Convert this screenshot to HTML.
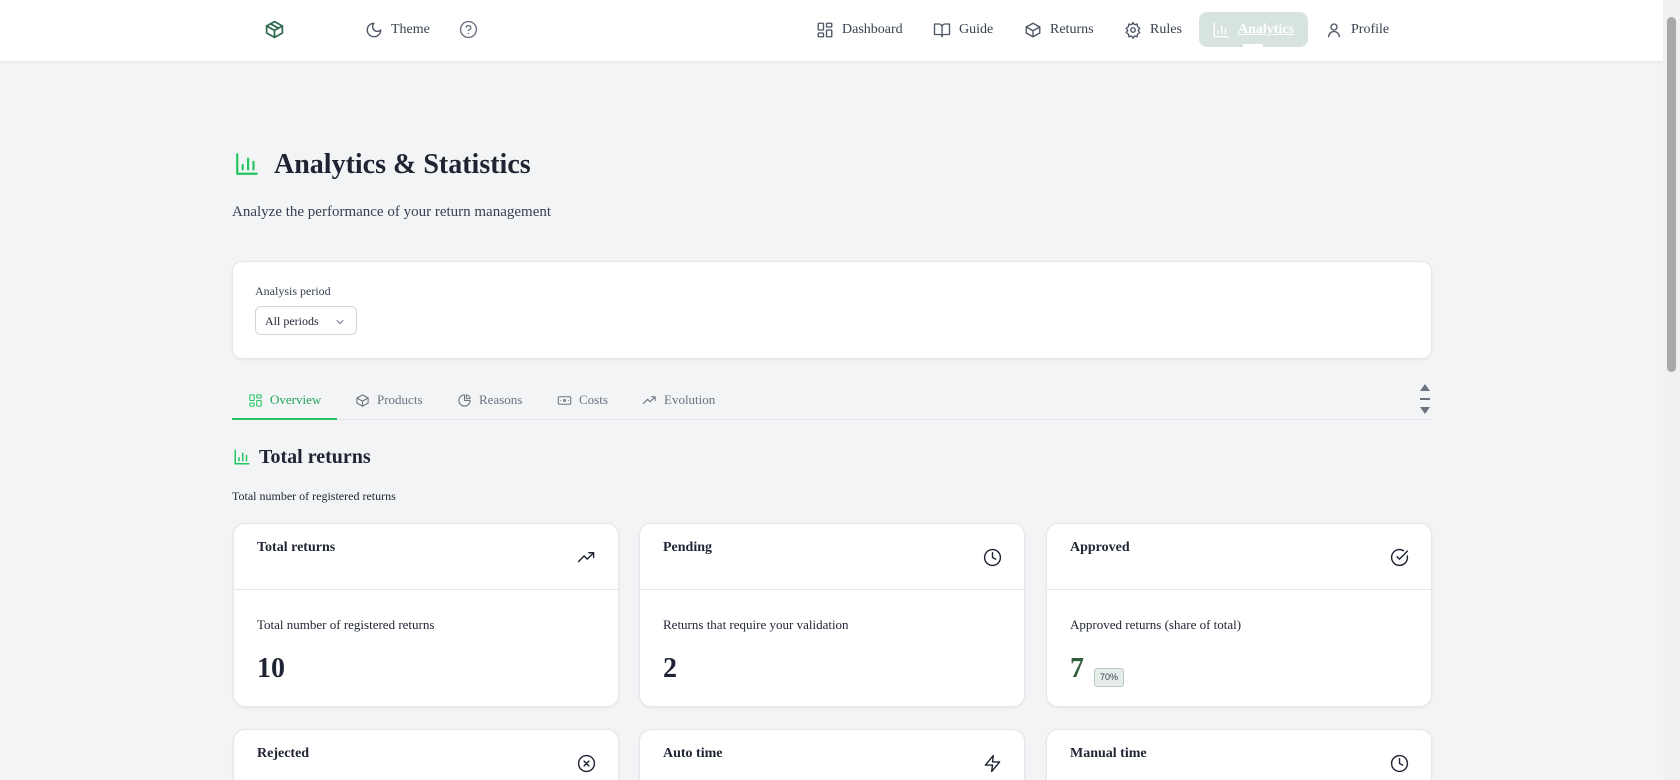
<!DOCTYPE html>
<html><head><meta charset="utf-8"><style>
*{box-sizing:border-box;margin:0;padding:0}
html{width:1680px;height:780px;overflow:hidden}
body{width:1680px;height:780px;overflow:hidden;background:#f3f4f6;font-family:"Liberation Serif",serif;color:#1f2433;position:relative}
#w{position:absolute;left:0;top:0;width:1680px;height:780px;overflow:hidden}
.nav{position:absolute;left:0;top:0;width:1663px;height:62px;background:#fff;border-bottom:1px solid #e5e7eb;box-shadow:0 1px 2px rgba(0,0,0,.04)}
.abs{position:absolute}
svg{fill:none;stroke-linecap:round;stroke-linejoin:round}
.ni{position:absolute;top:18px;font-size:14px;color:#374151;display:flex;align-items:center;height:24px}
.ni svg{width:18px;height:18px;stroke:#4b5563;stroke-width:1.8;margin-right:8px}
.pill{position:absolute;left:1199px;top:12px;width:109px;height:35px;background:#d6e3de;border-radius:8px}
.sb{position:absolute;left:1663px;top:0;width:17px;height:780px;background:#f1f1f1}
.sb .th{position:absolute;left:4px;top:17px;width:9px;height:355px;background:#a8a8a8;border-radius:5px}
.card{position:absolute;background:#fff;border:1px solid #e5e7eb;border-radius:10px;box-shadow:0 1px 3px rgba(0,0,0,.05)}
.tab{position:absolute;top:392px;font-size:13px;color:#6b7280;display:flex;align-items:center}
.tab svg{width:15px;height:15px;stroke:#6b7280;stroke-width:1.7;margin-right:7px}
.sc{position:absolute;width:386px;height:184px;background:#fff;border:1px solid #e5e7eb;border-radius:12px;box-shadow:0 1px 3px rgba(0,0,0,.06);overflow:hidden}
.sc .h{height:66px;border-bottom:1px solid #e5e7eb;position:relative}
.sc .t{position:absolute;left:23px;top:16px;font-size:14px;font-weight:bold;color:#1f2433}
.sc .h svg{position:absolute;right:22px;top:24px;width:19px;height:19px;stroke:#1f2433;stroke-width:1.8}
.sc .d{position:absolute;left:23px;top:93px;font-size:13px;color:#1f2433}
.sc .n{position:absolute;left:23px;top:129px;font-size:28px;font-weight:bold;color:#1f2433}
</style></head><body><div id="w">
<div class="nav">
 <svg class="abs" style="left:264px;top:19px;width:21px;height:21px;stroke:#2d6a4f;stroke-width:2" viewBox="0 0 24 24"><path d="M21 8 12 3 3 8v8l9 5 9-5z"/><path d="M3 8l9 5 9-5M12 13v8M7.5 5.5l9 5"/></svg>
 <div class="ni" style="left:365px"><svg viewBox="0 0 24 24"><path d="M12 3a6 6 0 0 0 9 9 9 9 0 1 1-9-9z"/></svg>Theme</div>
 <svg class="abs" style="left:459px;top:20px;width:19px;height:19px;stroke:#6b7280;stroke-width:1.8" viewBox="0 0 24 24"><circle cx="12" cy="12" r="10"/><path d="M9.1 9a3 3 0 0 1 5.8 1c0 2-3 3-3 3M12 17h.01"/></svg>
 <div class="ni" style="left:816px"><svg viewBox="0 0 24 24"><rect x="3" y="3" width="7" height="9" rx="1"/><rect x="14" y="3" width="7" height="5" rx="1"/><rect x="14" y="12" width="7" height="9" rx="1"/><rect x="3" y="16" width="7" height="5" rx="1"/></svg>Dashboard</div>
 <div class="ni" style="left:933px"><svg viewBox="0 0 24 24"><path d="M2 4h6a4 4 0 0 1 4 4v13a3 3 0 0 0-3-3H2zM22 4h-6a4 4 0 0 0-4 4v13a3 3 0 0 1 3-3h7z"/></svg>Guide</div>
 <div class="ni" style="left:1024px"><svg viewBox="0 0 24 24"><path d="M21 8 12 3 3 8v8l9 5 9-5z"/><path d="M3 8l9 5 9-5M12 13v8"/></svg>Returns</div>
 <div class="ni" style="left:1124px"><svg viewBox="0 0 24 24"><circle cx="12" cy="12" r="3"/><path d="M12 2l2 3 3.5-1 .5 3.5 3 2-2 3 2 3-3 2-.5 3.5-3.5-1-2 3-2-3-3.5 1-.5-3.5-3-2 2-3-2-3 3-2 .5-3.5 3.5 1z"/></svg>Rules</div>
 <div class="pill"></div>
 <div class="ni" style="left:1212px;color:#fff;font-weight:bold;text-decoration:underline"><svg viewBox="0 0 24 24" style="stroke:#fff"><path d="M3 3v18h18M8 17v-4M13 17V7M18 17v-7"/></svg>Analytics</div>
 <div class="abs" style="left:1243px;top:44px;width:20px;height:4px;background:#fff"></div>
 <div class="ni" style="left:1325px"><svg viewBox="0 0 24 24"><circle cx="12" cy="8" r="4"/><path d="M5 21a7 7 0 0 1 14 0"/></svg>Profile</div>
</div>
<div class="sb"><div class="th"></div></div>

<svg class="abs" style="left:234px;top:151px;width:26px;height:26px;stroke:#22c55e;stroke-width:2" viewBox="0 0 24 24"><path d="M3 3v18h18M8 17v-4M13 17V7M18 17v-7"/></svg>
<div class="abs" style="left:274px;top:149px;font-size:28px;font-weight:bold;color:#1f2433">Analytics &amp; Statistics</div>
<div class="abs" style="left:232px;top:204px;font-size:15px;color:#374151">Analyze the performance of your return management</div>

<div class="card" style="left:232px;top:261px;width:1200px;height:98px"></div>
<div class="abs" style="left:255px;top:284px;font-size:12px;color:#374151">Analysis period</div>
<div class="abs" style="left:255px;top:306px;width:102px;height:29px;background:#fff;border:1px solid #d1d5db;border-radius:6px;font-size:12px;padding:7px 0 0 9px;color:#1f2433">All periods<svg style="position:absolute;right:10px;top:9px;width:12px;height:12px;stroke:#6b7280;stroke-width:2" viewBox="0 0 24 24"><path d="M6 9l6 6 6-6"/></svg></div>

<div class="abs" style="left:232px;top:419px;width:1200px;height:1px;background:#e5e7eb"></div>
<div class="abs" style="left:232px;top:418px;width:105px;height:2px;background:#22c55e"></div>
<div class="tab" style="left:248px;color:#22a55a"><svg viewBox="0 0 24 24" style="stroke:#22c55e"><rect x="3" y="3" width="7" height="9" rx="1"/><rect x="14" y="3" width="7" height="5" rx="1"/><rect x="14" y="12" width="7" height="9" rx="1"/><rect x="3" y="16" width="7" height="5" rx="1"/></svg>Overview</div>
<div class="tab" style="left:355px"><svg viewBox="0 0 24 24"><path d="M21 8 12 3 3 8v8l9 5 9-5z"/><path d="M3 8l9 5 9-5M12 13v8"/></svg>Products</div>
<div class="tab" style="left:457px"><svg viewBox="0 0 24 24"><path d="M21 12A9 9 0 1 1 12 3v9z"/><path d="M15 3a6 6 0 0 1 6 6h-6z"/></svg>Reasons</div>
<div class="tab" style="left:557px"><svg viewBox="0 0 24 24"><rect x="2" y="6" width="20" height="12" rx="2"/><circle cx="12" cy="12" r="1.5"/><path d="M6 12h.01M18 12h.01"/></svg>Costs</div>
<div class="tab" style="left:642px"><svg viewBox="0 0 24 24"><path d="M2 17l7-7 4 4 8-8M15 6h6v6"/></svg>Evolution</div>
<div class="abs" style="left:1420px;top:384px;width:0;height:0;border-left:5px solid transparent;border-right:5px solid transparent;border-bottom:7px solid #6b7280"></div>
<div class="abs" style="left:1420px;top:398px;width:10px;height:2px;background:#6b7280"></div>
<div class="abs" style="left:1420px;top:407px;width:0;height:0;border-left:5px solid transparent;border-right:5px solid transparent;border-top:7px solid #6b7280"></div>

<svg class="abs" style="left:233px;top:448px;width:18px;height:18px;stroke:#22c55e;stroke-width:2" viewBox="0 0 24 24"><path d="M3 3v18h18M8 17v-4M13 17V7M18 17v-7"/></svg>
<div class="abs" style="left:259px;top:446px;font-size:20px;font-weight:bold;color:#1f2433">Total returns</div>
<div class="abs" style="left:232px;top:489px;font-size:12px;color:#1f2433">Total number of registered returns</div>

<div class="sc" style="left:233px;top:523px"><div class="h"><div class="t">Total returns</div><svg viewBox="0 0 24 24"><path d="M2 17l7-7 4 4 8-8M15 6h6v6"/></svg></div><div class="d">Total number of registered returns</div><div class="n">10</div></div>
<div class="sc" style="left:639px;top:523px"><div class="h"><div class="t">Pending</div><svg viewBox="0 0 24 24"><circle cx="12" cy="12" r="10"/><path d="M12 6v6l4 2"/></svg></div><div class="d">Returns that require your validation</div><div class="n">2</div></div>
<div class="sc" style="left:1046px;top:523px"><div class="h"><div class="t">Approved</div><svg viewBox="0 0 24 24"><path d="M21.8 10A10 10 0 1 1 17 3.3"/><path d="M9 11l3 3L22 4"/></svg></div><div class="d">Approved returns (share of total)</div><div class="n" style="color:#2f5f3f">7</div><div style="position:absolute;left:47px;top:144px;width:30px;height:19px;background:#e6ede9;border:1px solid #b9c8c0;border-radius:3px;font-family:'Liberation Sans',sans-serif;font-size:9px;color:#374151;text-align:center;line-height:17px">70%</div></div>

<div class="sc" style="left:233px;top:729px;height:80px"><div class="h"><div class="t">Rejected</div><svg viewBox="0 0 24 24"><circle cx="12" cy="12" r="10"/><path d="M15 9l-6 6M9 9l6 6"/></svg></div></div>
<div class="sc" style="left:639px;top:729px;height:80px"><div class="h"><div class="t">Auto time</div><svg viewBox="0 0 24 24"><path d="M13 2 3 14h9l-1 8 10-12h-9z"/></svg></div></div>
<div class="sc" style="left:1046px;top:729px;height:80px"><div class="h"><div class="t">Manual time</div><svg viewBox="0 0 24 24"><circle cx="12" cy="12" r="10"/><path d="M12 6v6l4 2"/></svg></div></div>
</div></body></html>
